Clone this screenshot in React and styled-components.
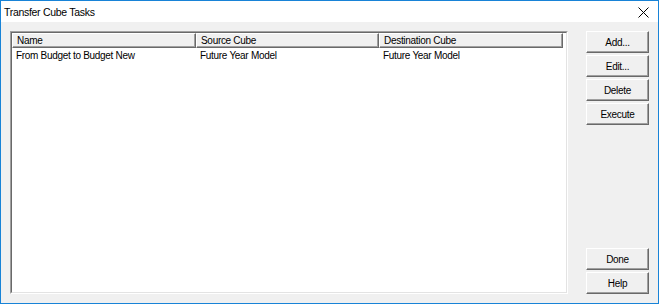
import React from "react"
import styled, { createGlobalStyle } from "styled-components"

const GlobalStyle = createGlobalStyle`
  html, body {
    margin: 0;
    padding: 0;
    background: #ffffff;
  }
  * {
    box-sizing: border-box;
  }
`

const Window = styled.div`
  width: 659px;
  height: 304px;
  border: 1px solid #1883d7;
  display: flex;
  flex-direction: column;
  font-family: "Liberation Sans", Arial, sans-serif;
  font-size: 10px;
  letter-spacing: -0.3px;
  color: #000;
  overflow: hidden;
`

const TitleBar = styled.div`
  height: 21px;
  background: #ffffff;
  display: flex;
  align-items: center;
  justify-content: space-between;
  padding: 0 9px 0 3px;
  flex-shrink: 0;
`

const Title = styled.span`
  font-family: "Liberation Sans", Arial, sans-serif;
  font-size: 10.5px;
  letter-spacing: -0.3px;
  color: #000;
  padding-top: 1px;
`

const CloseButton = styled.div`
  width: 12px;
  height: 12px;
  display: flex;
  align-items: center;
  justify-content: center;
  margin-top: 2px;
`

const Body = styled.div`
  flex: 1;
  background: #f0f0f0;
  display: flex;
  gap: 18px;
  padding: 9px;
`

const ListBox = styled.div`
  flex: 1;
  background: #ffffff;
  border-top: 1px solid #a0a0a0;
  border-left: 1px solid #a0a0a0;
  border-right: 1px solid #ffffff;
  border-bottom: 1px solid #ffffff;
  display: flex;
  flex-direction: column;
`

const ListInner = styled.div`
  flex: 1;
  border-top: 1px solid #696969;
  border-left: 1px solid #696969;
  border-right: 1px solid #e3e3e3;
  border-bottom: 1px solid #e3e3e3;
  display: flex;
  flex-direction: column;
`

const columns = "184px 183px 184px"

const HeaderRow = styled.div`
  display: grid;
  grid-template-columns: ${columns};
  height: 15px;
`

const HeaderCell = styled.div`
  background: #f0f0f0;
  border-top: 1px solid #ffffff;
  border-left: 1px solid #ffffff;
  border-right: 1px solid #696969;
  border-bottom: 1px solid #696969;
  box-shadow: inset -1px -1px 0 #a0a0a0;
  padding: 0 0 0 4px;
  line-height: 13px;
  white-space: nowrap;
  overflow: hidden;
`

const Row = styled.div`
  display: grid;
  grid-template-columns: ${columns};
  height: 14px;
  margin-top: 1px;
`

const Cell = styled.div`
  padding-left: 4px;
  line-height: 14px;
  white-space: nowrap;
`

const ButtonColumn = styled.div`
  width: 63px;
  display: flex;
  flex-direction: column;
  gap: 2px;
`

const Spacer = styled.div`
  flex: 1;
`

const Button = styled.div`
  height: 22px;
  background: #f0f0f0;
  border-top: 1px solid #ffffff;
  border-left: 1px solid #ffffff;
  border-right: 1px solid #696969;
  border-bottom: 1px solid #696969;
  box-shadow: inset -1px -1px 0 #a0a0a0;
  display: flex;
  align-items: center;
  justify-content: center;
  padding-top: 1px;
`

const tasks = [
  {
    name: "From Budget to Budget New",
    source: "Future Year Model",
    destination: "Future Year Model",
  },
]

const App = () => {
  return (
    <>
      <GlobalStyle />
      <Window>
        <TitleBar>
          <Title>Transfer Cube Tasks</Title>
          <CloseButton>
            <svg width="11" height="11" viewBox="0 0 11 11">
              <path d="M0.5 0.5 L10.5 10.5 M10.5 0.5 L0.5 10.5" stroke="#000" strokeWidth="1" fill="none" />
            </svg>
          </CloseButton>
        </TitleBar>
        <Body>
          <ListBox>
            <ListInner>
              <HeaderRow>
                <HeaderCell>Name</HeaderCell>
                <HeaderCell>Source Cube</HeaderCell>
                <HeaderCell>Destination Cube</HeaderCell>
              </HeaderRow>
              {tasks.map((t) => (
                <Row key={t.name}>
                  <Cell>{t.name}</Cell>
                  <Cell>{t.source}</Cell>
                  <Cell>{t.destination}</Cell>
                </Row>
              ))}
            </ListInner>
          </ListBox>
          <ButtonColumn>
            <Button>Add...</Button>
            <Button>Edit...</Button>
            <Button>Delete</Button>
            <Button>Execute</Button>
            <Spacer />
            <Button>Done</Button>
            <Button>Help</Button>
          </ButtonColumn>
        </Body>
      </Window>
    </>
  )
}

export default App
